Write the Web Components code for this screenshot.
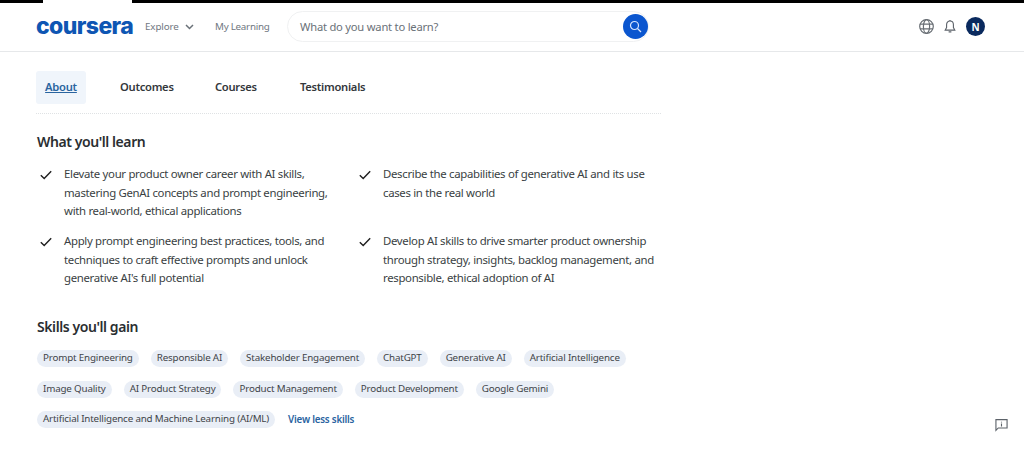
<!DOCTYPE html>
<html lang="en">
<head>
<meta charset="utf-8">
<title>Coursera</title>
<style>
  html, body { margin: 0; height: 100%; background: #fff; }
  body { font-family: "Noto Sans", "Open Sans", sans-serif; color: #1f1f1f; overflow: hidden; }
</style>
</head>
<body>
<top-strip></top-strip>
<site-header></site-header>
<course-page></course-page>
<feedback-button></feedback-button>

<script>
class TopStrip extends HTMLElement {
    constructor() {
        super();
        this.attachShadow({ mode: 'open' });
    }
    connectedCallback() {
        this.shadowRoot.innerHTML = `
        <style>
            :host { display: flex; height: 3px; }
            .black { background: #000; }
            .left { width: 43px; }
            .gap { width: 89px; }
            .right { flex: 1; }
        </style>
        <div class="black left"></div><div class="gap"></div><div class="black right"></div>`;
    }
}
customElements.define('top-strip', TopStrip);

class SiteHeader extends HTMLElement {
    constructor() {
        super();
        this.attachShadow({ mode: 'open' });
    }
    connectedCallback() {
        this.shadowRoot.innerHTML = `
        <style>
            :host {
                display: flex;
                align-items: center;
                height: 49px;
                box-sizing: border-box;
                padding: 0 39px 1px 36px;
                border-bottom: 1px solid #e6e8ea;
                background: #fff;
            }
            .logo {
                font-family: "Inter", sans-serif;
                font-weight: 800;
                font-size: 23px;
                letter-spacing: -0.6px;
                color: #0e56b3;
                width: 109px;
                margin-top: -1px;
            }
            .link {
                font-size: 9.8px;
                letter-spacing: -0.1px;
                color: #70777f;
                display: flex;
                align-items: center;
            }
            .explore { width: 70px; gap: 6px; }
            .learning { width: 72px; letter-spacing: -0.25px; }
            .search {
                width: 362px;
                height: 31px;
                box-sizing: border-box;
                border: 1px solid #f0f1f2;
                border-radius: 16px;
                display: flex;
                align-items: center;
                justify-content: space-between;
                padding-left: 12px;
                font-size: 11.2px;
                letter-spacing: -0.22px;
                color: #6a7178;
            }
            .go {
                width: 25px;
                height: 25px;
                border-radius: 50%;
                background: #0b56cf;
                display: flex;
                align-items: center;
                justify-content: center;
            }
            .tools {
                margin-left: auto;
                display: flex;
                align-items: center;
                gap: 10px;
            }
            .avatar {
                width: 19px;
                height: 19px;
                border-radius: 50%;
                background: #0a2a5e;
                color: #fff;
                font-size: 10px;
                font-weight: 700;
                display: flex;
                align-items: center;
                justify-content: center;
            }
            svg { display: block; }
        </style>
        <div class="logo">coursera</div>
        <div class="link explore">Explore
            <svg width="9" height="6" viewBox="0 0 9 6" fill="none" stroke="#6a7178" stroke-width="1.5"><path d="M1 1l3.500 3.500L8 1"/></svg>
        </div>
        <div class="link learning">My Learning</div>
        <div class="search">
            <span>What do you want to learn?</span>
            <div class="go">
                <svg width="13" height="13" viewBox="0 0 13 13" fill="none" stroke="#d8e6ff" stroke-width="1.2"><circle cx="5.500" cy="5.500" r="4"/><path d="M8.500 8.500l3.500 3.500"/></svg>
            </div>
        </div>
        <div class="tools">
            <svg width="15" height="15" viewBox="0 0 15 15" fill="none" stroke="#686e74" stroke-width="1.2"><circle cx="7.500" cy="7.500" r="6.800"/><ellipse cx="7.500" cy="7.500" rx="3.100" ry="6.800"/><path d="M1 5.200h13M1 9.800h13"/></svg>
            <svg width="12" height="15" viewBox="0 0 13 15" fill="none" stroke="#5c6269" stroke-width="1.2"><path d="M6.500 1.600c-2.400 0-3.700 1.800-3.700 4v3L1.300 11.400h10.400L10.200 8.600v-3c0-2.200-1.300-4-3.700-4z"/><path d="M6.500.5v1.100M5 13.300h3"/></svg>
            <div class="avatar">N</div>
        </div>`;
    }
}
customElements.define('site-header', SiteHeader);

class SectionTabs extends HTMLElement {
    constructor() {
        super();
        this.attachShadow({ mode: 'open' });
    }
    connectedCallback() {
        this.shadowRoot.innerHTML = `
        <style>
            :host {
                display: flex;
                align-items: center;
                height: 33px;
                width: 625px;
                padding-bottom: 9px;
                border-bottom: 1px dotted #dfe2e4;
                font-size: 11.2px;
                font-weight: 600;
                letter-spacing: -0.27px;
                color: #33373b;
            }
            span { display: block; margin-top: -2px; }
            .about {
                width: 50px;
                height: 33px;
                margin-top: 0;
                line-height: 31px;
                text-align: center;
                background: #f0f5fb;
                border-radius: 3px;
                color: #2a649f;
                text-decoration: underline;
                margin-right: 34px;
            }
            .outcomes { width: 95px; }
            .courses { width: 85px; }
        </style>
        <span class="about">About</span>
        <span class="outcomes">Outcomes</span>
        <span class="courses">Courses</span>
        <span>Testimonials</span>`;
    }
}
customElements.define('section-tabs', SectionTabs);

class LearnItem extends HTMLElement {
    constructor() {
        super();
        this.attachShadow({ mode: 'open' });
    }
    connectedCallback() {
        this.shadowRoot.innerHTML = `
        <style>
            :host {
                display: flex;
                font-size: 11.4px;
                line-height: 18.5px;
                letter-spacing: -0.32px;
                color: #3a3f43;
                white-space: nowrap;
            }
            svg { flex: none; margin: 5px 12px 0 4px; }
        </style>
        <svg width="12" height="10" viewBox="0 0 12 10" fill="none" stroke="#1f1f1f" stroke-width="1.4"><path d="M.8 5.200l3.400 3.400L11.200 1.200"/></svg>
        <div><slot></slot></div>`;
    }
}
customElements.define('learn-item', LearnItem);

class SkillChip extends HTMLElement {
    constructor() {
        super();
        this.attachShadow({ mode: 'open' });
    }
    connectedCallback() {
        this.shadowRoot.innerHTML = `
        <style>
            :host {
                display: inline-block;
                height: 17px;
                line-height: 16px;
                padding: 0 6px;
                border-radius: 9px;
                background: #e9eef6;
                font-size: 9.8px;
                letter-spacing: -0.17px;
                color: #3f4449;
                white-space: nowrap;
            }
        </style>
        <slot></slot>`;
    }
}
customElements.define('skill-chip', SkillChip);

class CoursePage extends HTMLElement {
    constructor() {
        super();
        this.attachShadow({ mode: 'open' });
    }
    connectedCallback() {
        this.shadowRoot.innerHTML = `
        <style>
            :host {
                display: block;
                padding: 19px 0 0 36px;
            }
            h2 {
                font-size: 14px;
                font-weight: 600;
                letter-spacing: -0.42px;
                color: #2a2e31;
                margin: 18px 0 0 1px;
                line-height: 20px;
            }
            .learn {
                margin-top: 13px;
                display: grid;
                grid-template-columns: 319px 300px;
                row-gap: 11.5px;
            }
            .skills-title { margin-top: 29.5px; }
            .row {
                display: flex;
                align-items: center;
                gap: 12px;
                margin: 13.5px 0 0 1px;
            }
            .row.first { margin-top: 13px; }
            .less {
                font-size: 9.8px;
                font-weight: 600;
                letter-spacing: -0.22px;
                color: #2a649f;
                margin-left: 1px;
            }
        </style>
        <section-tabs></section-tabs>
        <h2>What you'll learn</h2>
        <div class="learn">
            <learn-item>Elevate your product owner career with AI skills,<br>mastering GenAI concepts and prompt engineering,<br>with real-world, ethical applications</learn-item>
            <learn-item>Describe the capabilities of generative AI and its use<br>cases in the real world</learn-item>
            <learn-item>Apply prompt engineering best practices, tools, and<br>techniques to craft effective prompts and unlock<br>generative AI's full potential</learn-item>
            <learn-item>Develop AI skills to drive smarter product ownership<br>through strategy, insights, backlog management, and<br>responsible, ethical adoption of AI</learn-item>
        </div>
        <h2 class="skills-title">Skills you'll gain</h2>
        <div class="row first">
            <skill-chip>Prompt Engineering</skill-chip>
            <skill-chip>Responsible AI</skill-chip>
            <skill-chip>Stakeholder Engagement</skill-chip>
            <skill-chip>ChatGPT</skill-chip>
            <skill-chip>Generative AI</skill-chip>
            <skill-chip>Artificial Intelligence</skill-chip>
        </div>
        <div class="row">
            <skill-chip>Image Quality</skill-chip>
            <skill-chip>AI Product Strategy</skill-chip>
            <skill-chip>Product Management</skill-chip>
            <skill-chip>Product Development</skill-chip>
            <skill-chip>Google Gemini</skill-chip>
        </div>
        <div class="row">
            <skill-chip>Artificial Intelligence and Machine Learning (AI/ML)</skill-chip>
            <span class="less">View less skills</span>
        </div>`;
    }
}
customElements.define('course-page', CoursePage);

class FeedbackButton extends HTMLElement {
    constructor() {
        super();
        this.attachShadow({ mode: 'open' });
    }
    connectedCallback() {
        this.shadowRoot.innerHTML = `
        <style>
            :host { position: fixed; left: 995px; top: 418px; display: block; }
            svg { display: block; }
        </style>
        <svg width="13" height="14" viewBox="0 0 14 14" fill="none" stroke="#5c6269" stroke-width="1.2"><path d="M1 1.200h12v9H3.500L1 12.800z"/><path d="M7 3.500v.9M7 5.500v3"/></svg>`;
    }
}
customElements.define('feedback-button', FeedbackButton);
</script>
</body>
</html>
